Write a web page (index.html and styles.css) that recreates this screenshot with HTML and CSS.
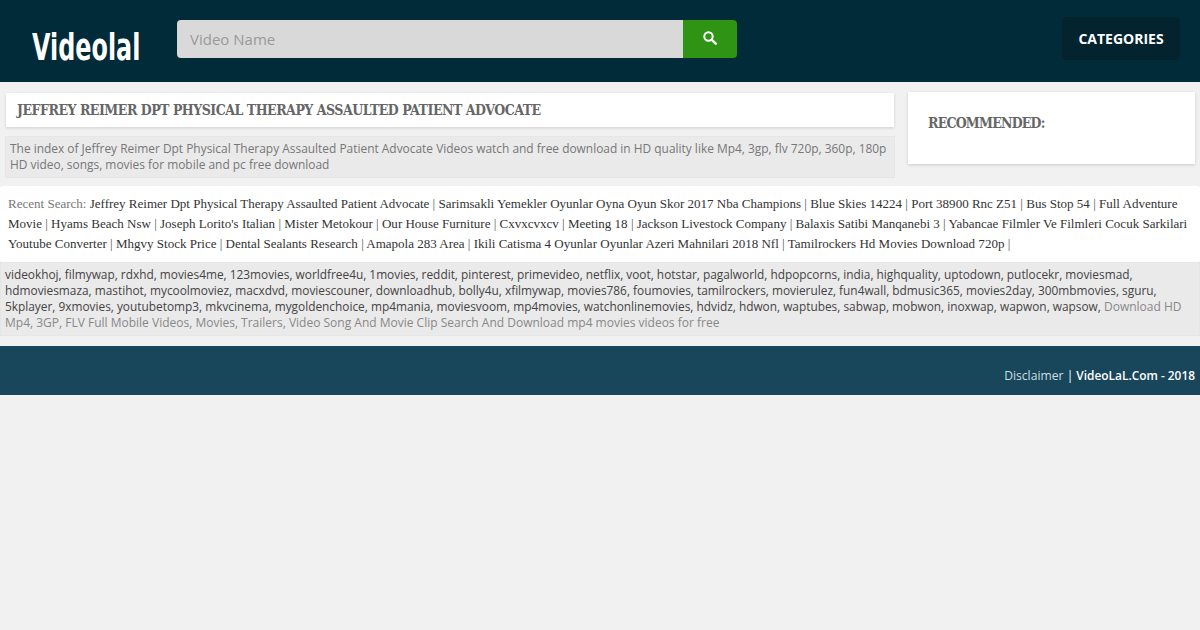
FILE: index.html
```html
<!DOCTYPE html>
<html lang="en">
<head>
<meta charset="utf-8">
<title>Jeffrey Reimer Dpt Physical Therapy Assaulted Patient Advocate</title>
<link rel="stylesheet" href="styles.css">
</head>
<body>
<header class="topbar">
  <a class="logo" href="#"><span class="logo-text">Videolal</span></a>
  <form class="search">
    <input class="search-input" type="text" placeholder="Video Name">
    <button class="search-btn" type="button" aria-label="Search">
      <svg width="15" height="14" viewBox="0 0 15 14"><circle cx="5.5" cy="5.5" r="4.2" fill="none" stroke="#fff" stroke-width="2"/><path d="M8.8 8.8 L12.8 12.6" stroke="#fff" stroke-width="2.4" stroke-linecap="round"/></svg>
    </button>
  </form>
  <a class="categories" href="#">CATEGORIES</a>
</header>
<main class="columns">
  <section class="col-main">
    <h1 class="title-card">JEFFREY REIMER DPT PHYSICAL THERAPY ASSAULTED PATIENT ADVOCATE</h1>
    <p class="desc">The index of Jeffrey Reimer Dpt Physical Therapy Assaulted Patient Advocate Videos watch and free download in HD quality like Mp4, 3gp, flv 720p, 360p, 180p HD video, songs, movies for mobile and pc free download</p>
  </section>
  <aside class="col-side">
    <h2 class="side-title">RECOMMENDED:</h2>
  </aside>
</main>
<section class="recent">
  <span class="recent-label">Recent Search:</span> <a href="#">Jeffrey Reimer Dpt Physical Therapy Assaulted Patient Advocate</a> | <a href="#">Sarimsakli Yemekler Oyunlar Oyna Oyun Skor 2017 Nba Champions</a> | <a href="#">Blue Skies 14224</a> | <a href="#">Port 38900 Rnc Z51</a> | <a href="#">Bus Stop 54</a> | <a href="#">Full Adventure Movie</a> | <a href="#">Hyams Beach Nsw</a> | <a href="#">Joseph Lorito's Italian</a> | <a href="#">Mister Metokour</a> | <a href="#">Our House Furniture</a> | <a href="#">Cxvxcvxcv</a> | <a href="#">Meeting 18</a> | <a href="#">Jackson Livestock Company</a> | <a href="#">Balaxis Satibi Manqanebi 3</a> | <a href="#">Yabancae Filmler Ve Filmleri Cocuk Sarkilari Youtube Converter</a> | <a href="#">Mhgvy Stock Price</a> | <a href="#">Dental Sealants Research</a> | <a href="#">Amapola 283 Area</a> | <a href="#">Ikili Catisma 4 Oyunlar Oyunlar Azeri Mahnilari 2018 Nfl</a> | <a href="#">Tamilrockers Hd Movies Download 720p</a> |
</section>
<section class="tags">
  <span class="tag-list">videokhoj, filmywap, rdxhd, movies4me, 123movies, worldfree4u, 1movies, reddit, pinterest, primevideo, netflix, voot, hotstar, pagalworld, hdpopcorns, india, highquality, uptodown, putlocekr, moviesmad, hdmoviesmaza, mastihot, mycoolmoviez, macxdvd, moviescouner, downloadhub, bolly4u, xfilmywap, movies786, foumovies, tamilrockers, movierulez, fun4wall, bdmusic365, movies2day, 300mbmovies, sguru, 5kplayer, 9xmovies, youtubetomp3, mkvcinema, mygoldenchoice, mp4mania, moviesvoom, mp4movies, watchonlinemovies, hdvidz, hdwon, waptubes, sabwap, mobwon, inoxwap, wapwon, wapsow,</span> Download HD Mp4, 3GP, FLV Full Mobile Videos, Movies, Trailers, Video Song And Movie Clip Search And Download mp4 movies videos for free
</section>
<footer class="footer">
  <a class="footer-link" href="#">Disclaimer</a>&nbsp;| <strong class="footer-brand">VideoLaL.Com - 2018</strong>
</footer>
</body>
</html>
```
FILE: styles.css
```css
* { box-sizing: border-box; }
html, body { margin: 0; padding: 0; }
body {
  background: #f1f1f1;
  font-family: "Open Sans", sans-serif;
  font-size: 12px;
  line-height: 16px;
  color: #666;
}
a { color: inherit; text-decoration: none; }

.topbar {
  height: 82px;
  background: #022b3a;
  display: flex;
  align-items: flex-start;
  padding: 20px 20px 0 32px;
}
.logo {
  width: 145px;
  height: 42px;
  flex: none;
}
.logo-text {
  font-family: "DejaVu Sans", sans-serif;
  font-weight: 700;
  font-size: 38px;
  line-height: 42px;
  color: #fff;
  display: inline-block;
  transform: scaleX(0.628);
  transform-origin: left center;
  margin-top: 6px;
  white-space: nowrap;
}
.search { display: flex; width: 560px; height: 38px; }
.search-input {
  width: 506px;
  height: 38px;
  border: 0;
  outline: 0;
  background: #d9d9d9;
  border-radius: 4px 0 0 4px;
  padding: 0 13px;
  font: 15px "Open Sans", sans-serif;
  color: #555;
}
.search-input::placeholder { color: #999; opacity: 1; }
.search-btn {
  width: 54px;
  height: 38px;
  border: 0;
  padding: 0 0 2px;
  background: #2f9413;
  border-radius: 0 4px 4px 0;
  display: flex;
  align-items: center;
  justify-content: center;
}
.categories {
  margin: -3px 0 0 auto;
  width: 118px;
  height: 43px;
  background: #03232f;
  border-radius: 4px;
  color: #fff;
  font-weight: 700;
  font-size: 14px;
  line-height: 43px;
  text-align: center;
}

.columns {
  display: flex;
  justify-content: space-between;
  padding: 10px 5px 0 5px;
}
.col-main { width: 890px; }
.title-card {
  margin: 1px 1px 0;
  height: 34px;
  background: #fff;
  box-shadow: 0 1px 3px rgba(0,0,0,.14);
  padding: 0 11px;
  font-family: "DejaVu Serif Condensed", "DejaVu Serif", serif;
  font-size: 14px;
  line-height: 35px;
  font-weight: 700;
  letter-spacing: -0.5px;
  color: #666;
  white-space: nowrap;
}
.desc {
  margin: 9px 0 0;
  height: 42px;
  padding: 3px 4px;
  background: #eaeaea;
  border: 1px solid #e6e6e6;
  color: #777;
  font-size: 11.93px;
}
.col-side {
  width: 287px;
  height: 72px;
  background: #fff;
  box-shadow: 0 1px 3px rgba(0,0,0,.16);
  padding: 0 20px;
}
.side-title {
  margin: 0;
  font-family: "DejaVu Serif Condensed", "DejaVu Serif", serif;
  font-size: 14px;
  line-height: 62px;
  font-weight: 700;
  letter-spacing: -0.8px;
  color: #666;
}

.recent {
  margin-top: 8px;
  height: 76px;
  background: #fff;
  border-radius: 3px;
  padding: 8px 8px 0;
  font-family: "Liberation Serif", serif;
  font-size: 13.03px;
  line-height: 20px;
  color: #555;
}
.recent a { color: #333; }
.recent-label { color: #777; }

.tags {
  height: 74px;
  background: #eaeaea;
  border: 1px solid #e6e6e6;
  padding: 4px 4px 0;
  color: #888;
}
.tag-list { color: #444; font-size: 11.87px; line-height: 1; }

.footer {
  margin-top: 10px;
  height: 49px;
  background: #18465a;
  padding: 22px 5px 0;
  text-align: right;
  color: #fff;
  font-size: 12px;
  line-height: 16px;
}
.footer-link { color: #cfdde3; font-size: 12.15px; line-height: 1; }
.footer-brand { font-weight: 600; font-size: 11.9px; line-height: 1; }
```
